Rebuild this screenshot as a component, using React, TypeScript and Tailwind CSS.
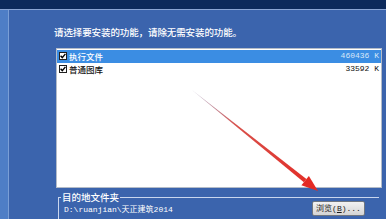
const cjk = { fontFamily: "'Noto Sans CJK SC', 'Noto Sans', sans-serif" }
const mono = { fontFamily: "'Liberation Mono', 'Noto Sans CJK SC', monospace" }

type Item = { name: string, size: string, selected: boolean }

const items: Item[] = [
    { name: "执行文件", size: "460436 K", selected: true },
    { name: "普通图库", size: "33592 K", selected: false },
]

function CheckBox() {
    return (
        <div className="w-[8px] h-[8px] bg-white border border-[#202020] flex items-center justify-center shrink-0">
            <svg width="6" height="6" viewBox="0 0 6 6">
                <path d="M0.6 2.8 L2.3 4.6 L5.4 0.9" stroke="#000" strokeWidth="1.4" fill="none" />
            </svg>
        </div>
    )
}

function ListRow({ item }: { item: Item }) {
    return (
        <div className={`flex flex-row items-center h-[12.5px] pl-[2px] pr-[2px] ${item.selected ? "bg-[#3b8de3]" : ""}`}>
            <CheckBox />
            <span style={cjk} className={`ml-[2px] text-[8.5px] leading-[12px] font-medium ${item.selected ? "text-white" : "text-[#111]"}`}>{item.name}</span>
            <span style={mono} className={`ml-auto text-[8px] leading-[12px] ${item.selected ? "text-[#d6e6f8]" : "text-[#111]"}`}>{item.size}</span>
        </div>
    )
}

function Arrow() {
    return (
        <svg className="absolute left-0 top-0 pointer-events-none" width="386" height="219" viewBox="0 0 386 219">
            <defs>
                <linearGradient id="shaft" x1="192" y1="90" x2="318" y2="191" gradientUnits="userSpaceOnUse">
                    <stop offset="0" stopColor="#8a7fa8" stopOpacity="0.6" />
                    <stop offset="0.35" stopColor="#d8504a" />
                    <stop offset="1" stopColor="#e42a24" />
                </linearGradient>
            </defs>
            <polygon points="192,90 306.4,179.0 303.9,182.2" fill="url(#shaft)" />
            <polygon points="301.4,185.3 308.9,175.9 318,191" fill="#e42a24" />
        </svg>
    )
}

export default function App() {
    return (
        <div className="relative w-[386px] h-[219px] overflow-hidden flex flex-col bg-[#3b64ad]">
            <div className="h-[9px] bg-[#0c2a5c] shrink-0" />
            <div className="h-px bg-[#8aa5d4] shrink-0" />
            <div className="flex flex-row flex-1">
                <div className="w-[8px] bg-[#4e7ec6]" />
                <div className="w-px bg-[#7a9fd6]" />
                <div className="flex-1 flex flex-col pl-[45px] pt-[16px]">
                    <p style={cjk} className="text-white text-[9.5px] leading-[12px] font-medium tracking-[-0.1px]">请选择要安装的功能，请除无需安装的功能。</p>
                    <div className="ml-[2px] mt-[10px] w-[326px] h-[140px] bg-white border border-[#b4bcc8] pt-px">
                        {items.map((item) =>
                            <ListRow key={item.name} item={item} />
                        )}
                    </div>
                    <div className="ml-[4px] mt-[5px] w-[321px] flex flex-col">
                        <div className="flex flex-row items-center h-[8px]">
                            <div className="w-[3px] h-[4px] self-end border-l border-t border-[#c9d6ee]" />
                            <span style={cjk} className="text-white text-[9.5px] leading-[8px] font-medium px-px">目的地文件夹</span>
                            <div className="flex-1 h-px bg-[#c9d6ee]" />
                        </div>
                        <div className="border-l border-[#c9d6ee] flex flex-row items-start justify-between pl-[5px] pr-[14px] h-[20px]">
                            <span style={mono} className="text-white text-[8px] leading-[10px] mt-[4px]">D:\ruanjian\天正建筑2014</span>
                            <button style={mono} className="w-[53px] h-[15px] bg-gradient-to-b from-[#f2f2f2] to-[#d4d4d4] border border-[#6f7680] rounded-[2px] text-[8px] leading-[13px] text-[#1a1a1a] flex items-center justify-center">
                                浏览(<span className="underline">B</span>)...
                            </button>
                        </div>
                    </div>
                </div>
            </div>
            <Arrow />
        </div>
    )
}
